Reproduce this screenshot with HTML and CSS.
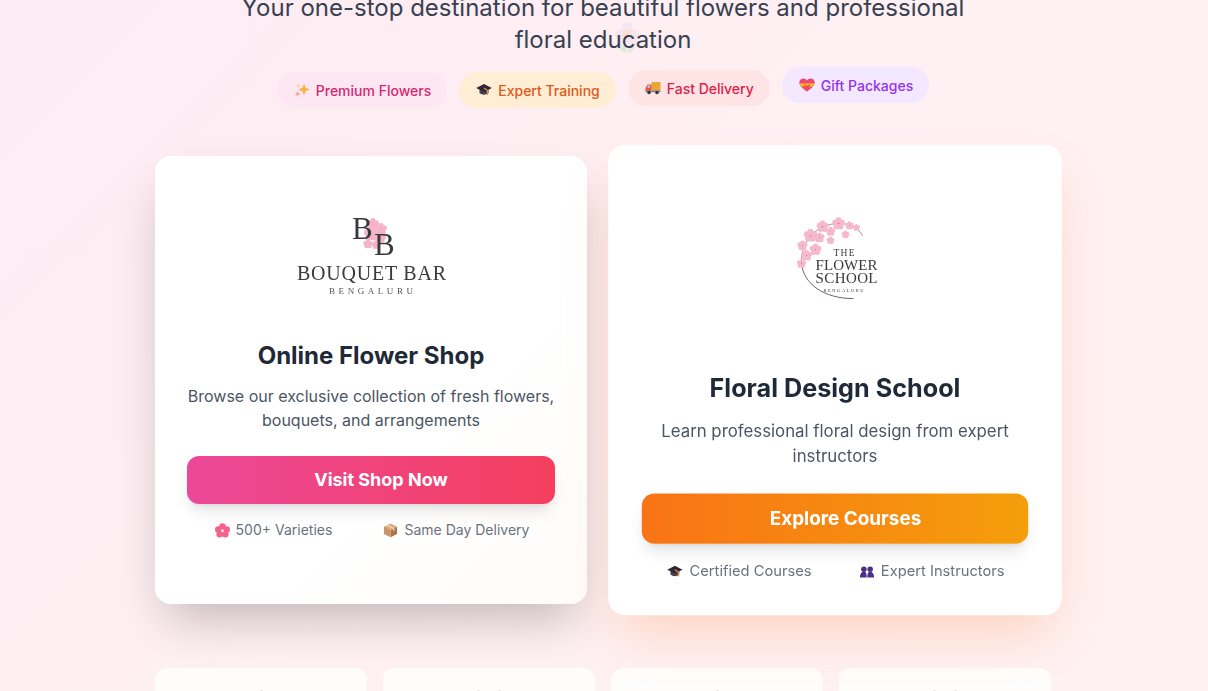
FILE: index.html
```html
<!DOCTYPE html>
<html lang="en">
<head>
  <meta charset="UTF-8" />
  <meta name="viewport" content="width=device-width, initial-scale=1.0" />
  <title>Bouquet Bar</title>
  <link rel="stylesheet" href="styles.css">
</head>
<body>
  <svg class="float-flower" viewBox="0 0 24 32" aria-hidden="true">
    <path d="M5 23c4 0 6 2 7 7-5 1-8-2-7-7zM19 23c-4 0-6 2-7 7 5 1 8-2 7-7z" fill="#dbe7d2"/>
    <circle cx="12" cy="6" r="6" fill="#f1e5f2"/><circle cx="5" cy="12" r="5" fill="#f1e5f2"/>
    <circle cx="19" cy="12" r="5" fill="#f1e5f2"/><circle cx="7" cy="19" r="5" fill="#f1e5f2"/>
    <circle cx="17" cy="19" r="5" fill="#f1e5f2"/><circle cx="12" cy="13" r="5" fill="#fbdcc4"/>
  </svg>

  <svg class="defs" aria-hidden="true">
    <defs>
      <g id="bloom">
        <circle cx="0" cy="-2.200" r="1.800"/><circle cx="2.100" cy="-.7" r="1.800"/>
        <circle cx="1.300" cy="1.800" r="1.800"/><circle cx="-1.300" cy="1.800" r="1.800"/>
        <circle cx="-2.100" cy="-.7" r="1.800"/>
        <circle cx="0" cy="0" r=".4" fill="#a06a7c"/>
      </g>
    </defs>
  </svg>

  <main class="page">
    <header class="hero">
      <p class="tagline">Your one-stop destination for beautiful flowers and professional floral education</p>
      <div class="pills">
        <span class="pill pill-pink">
          <svg class="icon" viewBox="0 0 16 16"><path d="M10 1.500l1.500 4.300 4.200 1.700-4.200 1.700L10 13.500 8.500 9.200 4.300 7.500l4.200-1.700z" fill="#fbb040"/><path d="M3.500 9l.8 2.100 2.100.9-2.100.9-.8 2.100-.8-2.100-2.100-.9 2.100-.9z" fill="#f9a58a"/><path d="M4 1.500l.6 1.500 1.500.6-1.500.6L4 5.700l-.6-1.500-1.500-.6 1.500-.6z" fill="#fcd27a"/></svg>
          Premium Flowers
        </span>
        <span class="pill pill-amber">
          <svg class="icon" viewBox="0 0 16 16"><path d="M3.500 7v4c2.500 2.300 6.500 2.300 9 0V7z" fill="#4a3f52"/><path d="M8 2L15.800 6 8 10 .2 6z" fill="#2e2838"/><path d="M8 6l3.500 2.500v4.500" stroke="#e8913a" stroke-width="1.200" fill="none"/></svg>
          Expert Training
        </span>
        <span class="pill pill-red">
          <svg class="icon" viewBox="0 0 16 16"><rect x="6.500" y="2" width="9" height="9.500" fill="#e9a63a"/><path d="M.5 8l2-3.500h4v7H.5z" fill="#e8553a"/><rect x="2.500" y="5.500" width="2.500" height="2.200" fill="#a5dcf2"/><rect x=".5" y="10.500" width="15" height="1.800" fill="#8a8f9c"/><circle cx="4" cy="12.500" r="1.800" fill="#343444"/><circle cx="12" cy="12.500" r="1.800" fill="#343444"/></svg>
          Fast Delivery
        </span>
        <span class="pill pill-purple">
          <svg class="icon" viewBox="0 0 16 16"><path d="M8 14.500C3 11 .3 8.500.3 5.500.3 3 2.300 1.500 4.500 1.500c1.500 0 2.700.8 3.500 2 .8-1.200 2-2 3.500-2 2.200 0 4.200 1.500 4.200 4 0 3-2.700 5.500-7.700 9z" fill="#ef476f"/><path d="M.5 6.500h15c-.3 1-.9 2-1.800 3H2.300c-.9-1-1.500-2-1.800-3z" fill="#fbbf24"/><path d="M5 8l3 1.500L11 8" stroke="#d9363e" stroke-width="1" fill="none"/></svg>
          Gift Packages
        </span>
      </div>
    </header>

    <section class="cards">
      <article class="card card-shop">
        <div class="logo logo-shop">
          <svg class="logo-art" viewBox="1 0 180 100" width="180" height="100" role="img" aria-label="Bouquet Bar Bengaluru">
            <g fill="#f7b3ca">
              <use href="#bloom" transform="translate(93 19) scale(1.500)"/>
              <use href="#bloom" transform="translate(101 24) scale(1.500)"/>
              <use href="#bloom" transform="translate(91 29) scale(1.800)"/>
              <use href="#bloom" transform="translate(100 33) scale(1.500)"/>
              <use href="#bloom" transform="translate(88 39) scale(1.200)"/>
              <use href="#bloom" transform="translate(96 40) scale(1.100)"/>
            </g>
            <text class="mono" x="72" y="34">B</text>
            <text class="mono" x="94" y="50">B</text>
            <text class="logo-word" x="17" y="75" textLength="149">BOUQUET BAR</text>
            <text class="logo-place" x="49" y="89" textLength="84">BENGALURU</text>
          </svg>
        </div>
        <h2>Online Flower Shop</h2>
        <p class="card-text">Browse our exclusive collection of fresh flowers, bouquets, and arrangements</p>
        <a class="card-button btn-shop" href="#">Visit Shop Now</a>
        <div class="card-meta">
          <span class="meta-item">
            <svg class="icon" viewBox="0 0 16 16"><g fill="#f6608a"><circle cx="8" cy="3.800" r="3.500"/><circle cx="3.500" cy="7" r="3.500"/><circle cx="12.500" cy="7" r="3.500"/><circle cx="5" cy="12" r="3.500"/><circle cx="11" cy="12" r="3.500"/></g><circle cx="8" cy="8.300" r="1.300" fill="#fde3ea"/></svg>
            500+ Varieties
          </span>
          <span class="meta-item">
            <svg class="icon" viewBox="0 0 16 16"><path d="M8 .8l7 3.400v7.600L8 15.200z" fill="#a9744a"/><path d="M8 .8L1 4.200v7.600l7 3.400z" fill="#c99468"/><path d="M1 4.200L8 7.700l7-3.500L8 .8z" fill="#dcae82"/><path d="M4.500 2.500l7 3.500v2.500" stroke="#efd6b8" stroke-width="1.200" fill="none"/></svg>
            Same Day Delivery
          </span>
        </div>
      </article>

      <article class="card card-school">
        <div class="logo logo-school">
          <svg class="logo-art" viewBox="0 0 110 105" width="105" height="100" role="img" aria-label="The Flower School Bengaluru">
            <path d="M21 60C20 38 36 20 58 20c10 0 19 3 24 12" stroke="#8a7378" stroke-width=".8" fill="none"/>
            <path d="M21 60c2 20 22 35 52 35" stroke="#5f5256" stroke-width=".9" fill="none"/>
            <g fill="#f6b8cb">
              <use href="#bloom" transform="translate(21 60) scale(1.200)"/>
              <use href="#bloom" transform="translate(26 52) scale(1.400)"/>
              <use href="#bloom" transform="translate(35 46) scale(1.500)"/>
              <use href="#bloom" transform="translate(22 42) scale(1.300)"/>
              <use href="#bloom" transform="translate(30 32) scale(1.700)"/>
              <use href="#bloom" transform="translate(39 34) scale(1.300)"/>
              <use href="#bloom" transform="translate(42 23) scale(1.500)"/>
              <use href="#bloom" transform="translate(50 28) scale(1.200)"/>
              <use href="#bloom" transform="translate(58 20) scale(1.600)"/>
              <use href="#bloom" transform="translate(50 37) scale(1)"/>
              <use href="#bloom" transform="translate(65 31) scale(1)"/>
              <use href="#bloom" transform="translate(69 22) scale(1.100)"/>
              <use href="#bloom" transform="translate(76 24) scale(.9)"/>
            </g>
            <text class="school-the" x="53" y="52" textLength="21">THE</text>
            <text class="school-word" x="35" y="66.500" textLength="62">FLOWER</text>
            <text class="school-word" x="35" y="79" textLength="62">SCHOOL</text>
            <text class="school-place" x="43" y="88" textLength="40">BENGALURU</text>
          </svg>
        </div>
        <h2>Floral Design School</h2>
        <p class="card-text">Learn professional floral design from expert instructors</p>
        <a class="card-button btn-school" href="#">Explore Courses</a>
        <div class="card-meta">
          <span class="meta-item">
            <svg class="icon" viewBox="0 0 16 16"><path d="M3.500 7v4c2.500 2.300 6.500 2.300 9 0V7z" fill="#4a3f52"/><path d="M8 2L15.800 6 8 10 .2 6z" fill="#2e2838"/><path d="M8 6l3.500 2.500v4.500" stroke="#e8913a" stroke-width="1.200" fill="none"/></svg>
            Certified Courses
          </span>
          <span class="meta-item">
            <svg class="icon" viewBox="0 0 16 16"><g fill="#4c2f86"><circle cx="4.800" cy="5.500" r="2.800"/><circle cx="11.200" cy="5.500" r="2.800"/><path d="M.8 14c0-4 1.500-6 4-6s2.900 2 2.900 6zM8.300 14c0-4 .7-6 2.900-6s4 2 4 6z"/></g></svg>
            Expert Instructors
          </span>
        </div>
      </article>
    </section>

    <section class="stats">
      <div class="stat"><i class="stat-mark"></i></div>
      <div class="stat"><i class="stat-mark"></i><i class="stat-mark"></i></div>
      <div class="stat"><i class="stat-mark"></i></div>
      <div class="stat"><i class="stat-mark"></i><i class="stat-mark"></i></div>
    </section>
  </main>
</body>
</html>
```

FILE: styles.css
```css
* { box-sizing: border-box; margin: 0; padding: 0; }
html, body { height: 100%; overflow: hidden; }
body {
  font-family: Inter, 'Liberation Sans', sans-serif;
  background: linear-gradient(135deg, #fdecf4 0%, #fff0f3 50%, #fff1f1 100%);
  color: #1f2937;
}
.page {
  width: 896px;
  margin: -8px auto 0 155px;
}
.defs {
  position: absolute;
  width: 0;
  height: 0;
}
.float-flower {
  position: absolute;
  left: 615px;
  top: 22px;
  width: 24px;
  height: 32px;
  opacity: 0.75;
}
.hero {
  position: relative;
  text-align: center;
}
.tagline {
  width: 768px;
  margin: 0 auto;
  font-size: 24px;
  line-height: 32px;
  color: #374151;
}
.pills {
  display: flex;
  justify-content: center;
  gap: 12px;
  margin-top: 16px;
}
.pill {
  display: flex;
  align-items: center;
  gap: 6px;
  height: 36px;
  padding: 0 16px 0 17px;
  border-radius: 18px;
  font-size: 14px;
  font-weight: 500;
}
.pill-pink { background: #fce7f3; color: #d6286f; }
.pill-amber { background: #ffedd5; color: #dd5a18; }
.pill-red { background: #ffe4e6; color: #e11d48; transform: translateY(-2px); }
.pill-purple { background: #f3e8ff; color: #9333ea; transform: translateY(-5px); }
.icon { width: 16px; height: 16px; flex: none; }

.cards {
  display: grid;
  grid-template-columns: 1fr 1fr;
  gap: 32px;
  margin-top: 48px;
}
.card {
  height: 448px;
  padding: 32px;
  background: #fff;
  border-radius: 16px;
  text-align: center;
}
.card-shop {
  background: linear-gradient(135deg, #fff 60%, #fffcfa);
  box-shadow: 0 25px 50px -12px rgba(0,0,0,0.25);
}
.card-school { box-shadow: 0 25px 50px -12px rgba(249,115,22,0.25); transform: scale(1.05); }

/* logos stand in for the raster artwork, so they get a slight softening */
.logo {
  margin-bottom: 24px;
  display: flex;
  justify-content: center;
  align-items: flex-start;
}
.logo-shop { height: 128px; padding-top: 17px; }
.logo-school { height: 160px; padding-top: 24px; }
.logo-art { display: block; flex: none; filter: blur(0.3px); }
.logo-art text { font-family: 'Liberation Serif', serif; fill: #3a3a3d; }
.logo-art .mono { font-size: 31px; }
.logo-art .logo-word { font-size: 20px; }
.logo-art .logo-place { font-size: 9px; fill: #55555a; }
.logo-art .school-the { font-size: 9.500px; }
.logo-art .school-word { font-size: 15px; }
.logo-art .school-place { font-size: 4.500px; }

h2 {
  font-size: 24px;
  line-height: 32px;
  font-weight: 700;
  color: #1f2937;
}
.card-text {
  margin-top: 12px;
  font-size: 16px;
  line-height: 24px;
  color: #4b5563;
}
.card-button {
  display: block;
  height: 48px;
  margin-top: 24px;
  padding-left: 20px;
  border-radius: 12px;
  color: #fff;
  font-size: 18px;
  font-weight: 700;
  line-height: 48px;
  text-decoration: none;
  box-shadow: 0 10px 15px -3px rgba(0,0,0,0.1), 0 4px 6px -4px rgba(0,0,0,0.1);
}
.btn-shop { background: linear-gradient(90deg, #ec4899, #f43f5e); }
.btn-school { background: linear-gradient(90deg, #f97316, #f59e0b); }
.card-meta {
  display: flex;
  justify-content: space-around;
  margin-top: 16px;
  padding-left: 2px;
}
.meta-item {
  display: flex;
  align-items: center;
  gap: 6px;
  font-size: 14px;
  line-height: 20px;
  color: #6b7280;
}
.meta-item .icon { width: 15px; height: 15px; }

.stats {
  display: grid;
  grid-template-columns: repeat(4, 1fr);
  gap: 16px;
  margin-top: 64px;
}
.stat {
  display: flex;
  justify-content: center;
  gap: 18px;
  height: 120px;
  padding-top: 22px;
  background: #fffdfb;
  border-radius: 12px;
}
.stat-mark {
  width: 3px;
  height: 3px;
  border-radius: 50%;
  background: #e6e2de;
}
```
